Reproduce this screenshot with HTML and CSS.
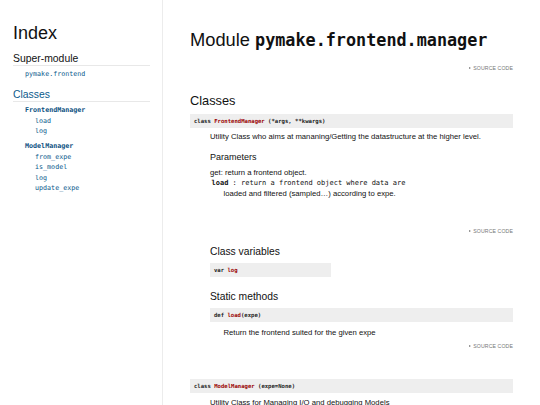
FILE: index.html
```html
<!DOCTYPE html>
<html>
<head>
<meta charset="utf-8">
<title>pymake.frontend.manager</title>
<link rel="stylesheet" href="styles.css">
</head>
<body>
<nav class="sidebar">
  <h1 class="index-title">Index</h1>
  <h3 class="side-head">Super-module</h3>
  <ul class="side-list">
    <li><a class="mono" href="#">pymake.frontend</a></li>
  </ul>
  <h3 class="side-head link">Classes</h3>
  <ul class="side-list classes">
    <li>
      <a class="mono bold" href="#">FrontendManager</a>
      <ul class="members">
        <li><a class="mono" href="#">load</a></li>
        <li><a class="mono" href="#">log</a></li>
      </ul>
    </li>
    <li class="second">
      <a class="mono bold" href="#">ModelManager</a>
      <ul class="members">
        <li><a class="mono" href="#">from_expe</a></li>
        <li><a class="mono" href="#">is_model</a></li>
        <li><a class="mono" href="#">log</a></li>
        <li><a class="mono" href="#">update_expe</a></li>
      </ul>
    </li>
  </ul>
</nav>
<main class="content">
  <h1 class="title">Module <code>pymake.frontend.manager</code></h1>
  <div class="source s1"><span class="tri"></span>SOURCE CODE</div>
  <h2 class="section">Classes</h2>
  <div class="name full c1"><span class="kw">class</span> <span class="ident">FrontendManager</span> (*args, **kwargs)</div>
  <div class="dd">
    <p class="desc">Utility Class who aims at mananing/Getting the datastructure at the higher level.</p>
    <h4 class="params-head">Parameters</h4>
    <div class="params">
      <div class="pline">get: return a frontend object.</div>
      <div class="pline mono code"><b>load</b> : return a frontend object where data are</div>
      <div class="pline indent">loaded and filtered (sampled…) according to expe.</div>
    </div>
    <div class="source s2"><span class="tri"></span>SOURCE CODE</div>
    <h3 class="sub">Class variables</h3>
    <div class="name half"><span class="kw">var</span> <span class="ident">log</span></div>
    <h3 class="sub sm">Static methods</h3>
    <div class="name full c2"><span class="kw">def</span> <span class="ident">load</span>(expe)</div>
    <p class="desc indent r1">Return the frontend suited for the given expe</p>
    <div class="source s3"><span class="tri"></span>SOURCE CODE</div>
  </div>
  <div class="name full c3"><span class="kw">class</span> <span class="ident">ModelManager</span> (expe=None)</div>
  <div class="dd">
    <p class="desc u2">Utility Class for Managing I/O and debugging Models</p>
  </div>
</main>
</body>
</html>
```
FILE: styles.css
```css
* { box-sizing: border-box; }
html, body { margin: 0; padding: 0; }
body {
  font-family: "Liberation Sans", Arial, sans-serif;
  color: #111;
  display: flex;
  align-items: flex-start;
  width: 540px;
  height: 405px;
  overflow: hidden;
  background: #fff;
}
a { color: #0b5a8c; text-decoration: none; }
.mono { font-family: "DejaVu Sans Mono", "Liberation Mono", monospace; }
.bold { font-weight: bold; color: #0a4f80; }

/* sidebar */
.sidebar {
  width: 163px;
  min-height: 405px;
  border-right: 1px solid #ececec;
  padding: 22px 12px 0 13px;
  flex: none;
}
.index-title {
  margin: 0;
  font-size: 18px;
  line-height: 22px;
  font-weight: normal;
}
.side-head {
  margin: 9px 0 0 0;
  font-size: 10.4px;
  line-height: 12px;
  font-weight: normal;
  border-bottom: 1px solid #e8e8e8;
}
.side-head.link { color: #0b5a8c; margin-top: 10px; }
.side-list {
  list-style: none;
  margin: 3px 0 0 0;
  padding: 0 0 0 12px;
  font-size: 6.7px;
  line-height: 10px;
}
.side-list.classes { margin-top: 3px; line-height: 10.5px; }
.side-list .second { margin-top: 4.5px; }
.members {
  list-style: none;
  margin: 0;
  padding: 0 0 0 10px;
}

/* main */
.content {
  flex: 1;
  padding: 0 27px 0 27px;
  min-width: 0;
}
.title {
  margin: 29px 0 0 0;
  font-size: 18.3px;
  line-height: 22px;
  font-weight: normal;
  white-space: nowrap;
}
.title code {
  font-family: "DejaVu Sans Mono", "Liberation Mono", monospace;
  font-weight: bold;
  font-size: 16.8px;
}
.source {
  display: flex;
  justify-content: flex-end;
  align-items: center;
  font-size: 5.2px;
  line-height: 8px;
  color: #777;
  letter-spacing: 0.1px;
}
.tri {
  width: 0;
  height: 0;
  border-left: 2.4px solid #777;
  border-top: 1.4px solid transparent;
  border-bottom: 1.4px solid transparent;
  margin-right: 2px;
}
.s1 { margin-top: 13px; }
.section {
  margin: 21px 0 0 0;
  font-size: 12.8px;
  line-height: 16px;
  font-weight: normal;
}
.name {
  background: #eee;
  font-family: "DejaVu Sans Mono", "Liberation Mono", monospace;
  font-weight: bold;
  font-size: 5.6px;
  line-height: 8px;
  padding: 3px 4px;
  color: #222;
  white-space: nowrap;
}
.name.full { width: 100%; }
.name.half { width: 40%; margin-top: 5px; }
.ident { color: #990000; }
.c1 { margin-top: 5px; }
.dd { margin-left: 20px; }
.desc {
  margin: 4px 0 0 0;
  font-size: 7.7px;
  line-height: 10.5px;
}
.params-head {
  margin: 8px 0 0 0;
  font-size: 9px;
  line-height: 12px;
  font-weight: normal;
}
.params {
  margin-top: 5px;
  font-size: 7.7px;
  line-height: 10.5px;
}
.pline.code { font-size: 7px; padding-left: 1.5px; }
.pline.code b { font-weight: bold; }
.indent { padding-left: 13.5px; }
.s2 { margin-top: 28px; }
.sub {
  margin: 10px 0 0 0;
  font-size: 10.3px;
  line-height: 13px;
  font-weight: normal;
}
.sub.sm { margin-top: 13px; }
.c2 { margin-top: 5px; }
.r1 { margin-top: 6px; }
.s3 { margin-top: 3px; }
.c3 { margin-top: 29px; }
.u2 { margin-top: 5px; }
```
